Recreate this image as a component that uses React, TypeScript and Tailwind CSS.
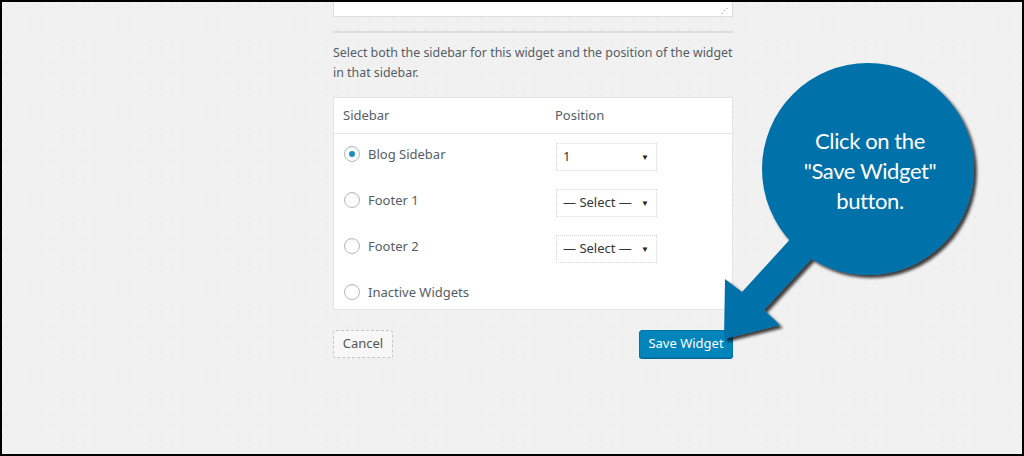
import React from "react";

const rows = [
  { label: "Blog Sidebar", checked: true, select: "1" },
  { label: "Footer 1", checked: false, select: "— Select —" },
  { label: "Footer 2", checked: false, select: "— Select —" },
  { label: "Inactive Widgets", checked: false, select: null },
];

const Radio = ({ checked }: { checked: boolean }) => (
  <span className="flex h-4 w-4 shrink-0 items-center justify-center rounded-full border border-[#b4b9be] bg-white shadow-[inset_0_1px_2px_rgba(0,0,0,0.07)]">
    {checked && <span className="h-[6px] w-[6px] rounded-full bg-[#1e8cbe]" />}
  </span>
);

const FakeSelect = ({ value }: { value: string }) => (
  <div className="flex h-[28px] w-[101px] items-center justify-between border border-dotted border-[#d6d6d6] bg-white pl-[6px] pr-[7px] text-[13px] text-[#32373c]">
    <span>{value}</span>
    <span className="text-[8px] text-[#222]">▼</span>
  </div>
);

const Bubble = () => (
  <>
    <svg
      className="pointer-events-none absolute left-0 top-0"
      width="1024"
      height="456"
      viewBox="0 0 1024 456"
    >
      <defs>
        <filter id="sh" x="-20%" y="-20%" width="140%" height="140%">
          <feDropShadow dx="3" dy="3" stdDeviation="1.5" floodColor="#000" floodOpacity="0.75" />
        </filter>
      </defs>
      <g filter="url(#sh)" fill="#0071a9">
        <circle cx="866" cy="167" r="106" />
        <polygon points="792,233 740,290 723,277 722,337 778,323 762,308 812,254" />
      </g>
    </svg>
    <div className="absolute left-[768px] top-[124px] w-[200px] text-center font-['Lato',sans-serif] text-[22px] leading-[30px] tracking-[-0.4px] text-white">
      Click on the
      <br />
      "Save Widget"
      <br />
      button.
    </div>
  </>
);

export default function App() {
  return (
    <div className="h-[456px] w-[1024px] bg-black p-[2px]">
      <div className="relative h-full w-full overflow-hidden bg-[#f1f1f1] bg-[radial-gradient(#e0e0e0_0.6px,transparent_0.9px)] bg-[size:11px_11px] font-['Noto_Sans',sans-serif]">
        <div className="ml-[331px] flex w-[400px] flex-col">
          {/* bottom of the textarea */}
          <div className="relative -mt-[40px] h-[55px] border border-[#ddd] bg-white">
            <div className="absolute bottom-[2px] right-[4px] text-[7px] leading-none text-[#888]">⋰</div>
          </div>
          <div className="mt-[14px] h-[2px] bg-[#dcdcdc]" />
          <p className="mt-[10px] text-[12.4px] leading-[20px] text-[#555d66]">
            Select both the sidebar for this widget and the position of the widget in that sidebar.
          </p>
          <div className="mt-[14px] border border-[#e2e4e7] bg-white text-[13px] text-[#555d66]">
            <div className="flex h-[36px] items-center border-b border-[#e2e4e7] px-[9px]">
              <span className="w-[212px]">Sidebar</span>
              <span>Position</span>
            </div>
            {rows.map((r, i) => (
              <div
                key={r.label}
                className={`flex items-start px-[10px] pt-[9px] ${i === rows.length - 1 ? "h-[37px]" : "h-[46px]"}`}
              >
                <div className="flex w-[212px] items-center gap-[8px] pt-[1px]">
                  <Radio checked={r.checked} />
                  <span className="leading-[20px]">{r.label}</span>
                </div>
                {r.select && <FakeSelect value={r.select} />}
              </div>
            ))}
          </div>
          <div className="mt-[20px] flex items-center justify-between">
            <button className="h-[28px] w-[60px] rounded-[3px] border border-dashed border-[#c5c5c5] bg-[#f7f7f7] text-[13px] text-[#555]">
              Cancel
            </button>
            <button className="h-[28px] w-[94px] rounded-[3px] border border-[#0073aa] bg-[#0085ba] text-[13px] text-white shadow-[0_1px_0_#006799]">
              Save Widget
            </button>
          </div>
        </div>
        <Bubble />
      </div>
    </div>
  );
}
